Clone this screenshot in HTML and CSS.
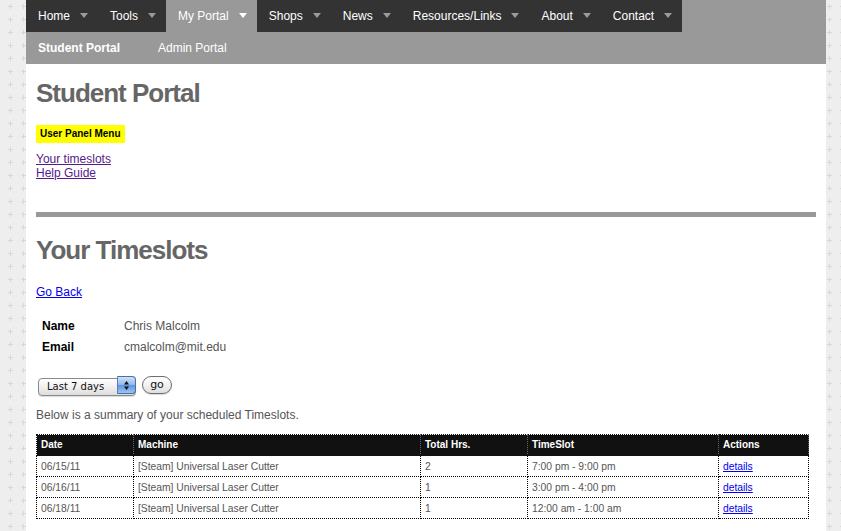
FILE: index.html
```html
<!DOCTYPE html>
<html lang="en">
<head>
<meta charset="utf-8">
<title>Student Portal</title>
<link rel="stylesheet" href="styles.css">
</head>
<body>
<div class="page">
  <nav class="topnav">
    <ul class="menu">
      <li class="menu-item"><a class="menu-link">Home</a><span class="caret"></span></li>
      <li class="menu-item"><a class="menu-link">Tools</a><span class="caret"></span></li>
      <li class="menu-item active"><a class="menu-link">My Portal</a><span class="caret"></span></li>
      <li class="menu-item"><a class="menu-link">Shops</a><span class="caret"></span></li>
      <li class="menu-item"><a class="menu-link">News</a><span class="caret"></span></li>
      <li class="menu-item"><a class="menu-link">Resources/Links</a><span class="caret"></span></li>
      <li class="menu-item"><a class="menu-link">About</a><span class="caret"></span></li>
      <li class="menu-item"><a class="menu-link">Contact</a><span class="caret"></span></li>
    </ul>
  </nav>
  <div class="subnav">
    <a class="sub-link current">Student Portal</a>
    <a class="sub-link">Admin Portal</a>
  </div>
  <main class="content">
    <h1 class="title">Student Portal</h1>
    <div class="panel-label">User Panel Menu</div>
    <ul class="panel-links">
      <li><a class="visited-link" href="#">Your timeslots</a></li>
      <li><a class="visited-link" href="#">Help Guide</a></li>
    </ul>
    <hr class="rule">
    <h1 class="title title-second">Your Timeslots</h1>
    <p class="back"><a class="link" href="#">Go Back</a></p>
    <dl class="info">
      <dt class="info-label">Name</dt><dd class="info-value">Chris Malcolm</dd>
      <dt class="info-label">Email</dt><dd class="info-value">cmalcolm@mit.edu</dd>
    </dl>
    <form class="filter">
      <div class="select-wrap">
        <select class="select"><option>Last 7 days</option></select>
        <span class="stepper">
          <svg width="7" height="11" viewBox="0 0 7 11"><path d="M3.5 1L6 4.5H1z M1 6.5H6L3.5 10z" fill="#111"/></svg>
        </span>
      </div>
      <button class="go" type="button">go</button>
    </form>
    <p class="summary">Below is a summary of your scheduled Timeslots.</p>
    <table class="slots">
      <colgroup>
        <col class="c-date"><col class="c-machine"><col class="c-hrs"><col class="c-slot"><col class="c-act">
      </colgroup>
      <thead>
        <tr><th>Date</th><th>Machine</th><th>Total Hrs.</th><th>TimeSlot</th><th>Actions</th></tr>
      </thead>
      <tbody>
        <tr><td>06/15/11</td><td>[Steam] Universal Laser Cutter</td><td>2</td><td>7:00 pm - 9:00 pm</td><td><a class="link" href="#">details</a></td></tr>
        <tr><td>06/16/11</td><td>[Steam] Universal Laser Cutter</td><td>1</td><td>3:00 pm - 4:00 pm</td><td><a class="link" href="#">details</a></td></tr>
        <tr><td>06/18/11</td><td>[Steam] Universal Laser Cutter</td><td>1</td><td>12:00 am - 1:00 am</td><td><a class="link" href="#">details</a></td></tr>
      </tbody>
    </table>
  </main>
</div>
</body>
</html>
```
FILE: styles.css
```css
html, body {
  margin: 0;
  padding: 0;
}
body {
  background-color: #eeeeee;
  background-image: url("data:image/svg+xml,%3Csvg xmlns='http://www.w3.org/2000/svg' width='13' height='13'%3E%3Cpath d='M4 6h5v1H4zM6 4h1v5H6z' fill='%23d8d8d8'/%3E%3C/svg%3E");
  background-position: 4px 0;
  font-family: "Liberation Sans", Arial, Helvetica, sans-serif;
  color: #555;
}
.page {
  width: 800px;
  margin-left: 26px;
  background: #fff;
  min-height: 560px;
}

/* top navigation */
.topnav {
  display: flex;
  height: 32px;
  background: #999;
}
.menu {
  display: flex;
  list-style: none;
  margin: 0;
  padding: 0;
  background: #333;
}
.menu-item {
  display: flex;
  align-items: center;
  gap: 10px;
  padding: 0 10px 0 12px;
  font-size: 12px;
  color: #fff;
}
.menu-item.active {
  background: #999;
}
.menu-link {
  color: #fff;
  text-decoration: none;
}
.caret {
  width: 0;
  height: 0;
  margin-top: -1px;
  border-left: 4.5px solid transparent;
  border-right: 4.5px solid transparent;
  border-top: 5px solid #9a9a9a;
}
.menu-item.active .caret {
  border-top-color: #fff;
}

.subnav {
  display: flex;
  align-items: center;
  gap: 38px;
  height: 32px;
  padding-left: 12px;
  background: #999;
  font-size: 12px;
}
.sub-link {
  color: #fff;
  text-decoration: none;
}
.sub-link.current {
  font-weight: bold;
}

/* content */
.content {
  padding: 0 10px 20px;
  overflow: hidden;
}
.title {
  margin: 14px 0 0;
  font-size: 26px;
  line-height: 30px;
  letter-spacing: -1px;
  font-weight: bold;
  color: #666;
}
.title-second {
  margin-top: 18px;
}
.panel-label {
  display: inline-block;
  margin-top: 17px;
  padding: 4px 4px;
  background: #ffff00;
  color: #000;
  font-size: 10px;
  line-height: 10px;
  font-weight: bold;
}
.panel-links {
  list-style: none;
  margin: 9px 0 0;
  padding: 0;
  font-size: 12px;
  line-height: 14px;
}
.visited-link {
  color: #551a8b;
}
.link {
  color: #0000ee;
}
.rule {
  margin: 32px 0 0;
  height: 5px;
  border: 0;
  background: #999;
}
.back {
  margin: 20px 0 0;
  font-size: 12px;
  line-height: 14px;
}
.info {
  display: grid;
  grid-template-columns: 88px auto;
  margin: 17px 0 0;
  font-size: 12px;
  line-height: 21px;
}
.info-label {
  padding-left: 6px;
  font-weight: bold;
  color: #000;
}
.info-value {
  margin: 0;
  color: #555;
}

.filter {
  display: flex;
  align-items: center;
  gap: 6px;
  margin: 18px 0 0 2px;
  height: 18px;
}
.select-wrap {
  position: relative;
  width: 98px;
  height: 18px;
}
.select {
  -webkit-appearance: none;
  appearance: none;
  box-sizing: border-box;
  width: 98px;
  height: 18px;
  margin: 0;
  padding: 0 0 0 8px;
  border: 1px solid #8a8a8a;
  border-radius: 4px;
  background: linear-gradient(#ffffff, #f0f0f0 50%, #dcdcdc);
  font-family: "DejaVu Sans", "Liberation Sans", sans-serif;
  font-size: 10px;
  color: #111;
  box-shadow: 0 1px 1px rgba(0,0,0,0.15);
}
.stepper {
  position: absolute;
  top: 0;
  right: 0;
  box-sizing: border-box;
  width: 19px;
  height: 18px;
  display: flex;
  align-items: center;
  justify-content: center;
  border: 1px solid #4a6ea8;
  border-left-color: #5d7fb5;
  border-radius: 0 4px 4px 0;
  background: linear-gradient(#cfe1f8, #8fb7ec 50%, #5c93e0 51%, #9cc4f4);
}
.go {
  box-sizing: border-box;
  width: 30px;
  height: 18px;
  padding: 0;
  border: 1px solid #6e6e6e;
  border-radius: 9px;
  background: linear-gradient(#ffffff, #f2f2f2 50%, #dedede);
  font-family: "DejaVu Sans", "Liberation Sans", sans-serif;
  font-size: 11px;
  line-height: 14px;
  color: #111;
  box-shadow: 0 1px 1px rgba(0,0,0,0.15);
}
.summary {
  margin: 14px 0 0;
  font-size: 12px;
  line-height: 14px;
  color: #555;
}

/* table */
.slots {
  width: 772px;
  margin-top: 12px;
  border-collapse: collapse;
  table-layout: fixed;
  font-size: 10.3px;
}
.c-date { width: 97px; }
.c-machine { width: 287px; }
.c-hrs { width: 107px; }
.c-slot { width: 191px; }
.c-act { width: 90px; }
.slots th,
.slots td {
  box-sizing: border-box;
  height: 21px;
  padding: 0 4px;
  line-height: 12px;
  text-align: left;
  vertical-align: middle;
  border: 1px dotted #000;
}
.slots th {
  background: #111;
  color: #fff;
  font-size: 10px;
  font-weight: bold;
  border-color: #111;
  border-right-color: #666;
}
.slots td {
  color: #555;
  padding-top: 1px;
}
```
